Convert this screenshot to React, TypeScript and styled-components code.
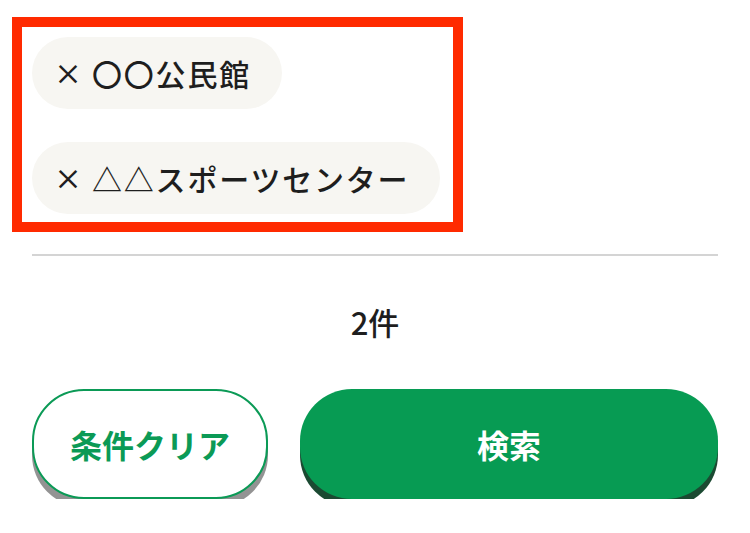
import styled, { createGlobalStyle } from "styled-components";

const GlobalStyle = createGlobalStyle`
  html, body {
    margin: 0;
    padding: 0;
    background: #fff;
  }
  body {
    font-family: "Noto Sans CJK JP", "Noto Sans", sans-serif;
    color: #222;
  }
`;

const filters = ["〇〇公民館", "△△スポーツセンター"];

const App = () => {
  return (
    <>
      <GlobalStyle />
      <Page>
        <FilterBox>
          {filters.map((name) => (
            <Chip key={name}>
              <ChipRemove>×</ChipRemove>
              <ChipLabel>{name}</ChipLabel>
            </Chip>
          ))}
        </FilterBox>
        <Divider />
        <ResultCount>2件</ResultCount>
        <ButtonRow>
          <ClearButton>条件クリア</ClearButton>
          <SearchButton>検索</SearchButton>
        </ButtonRow>
      </Page>
    </>
  );
};

const Page = styled.div`
  width: 750px;
  box-sizing: border-box;
  padding: 17px 32px 0;
  display: flex;
  flex-direction: column;
`;

const FilterBox = styled.div`
  width: 451px;
  box-sizing: border-box;
  margin-left: -20px;
  border: 10px solid #ff2a00;
  padding: 10px 10px 8px;
  display: flex;
  flex-direction: column;
  align-items: flex-start;
  gap: 33px;
`;

const Chip = styled.div`
  height: 72px;
  box-sizing: border-box;
  padding: 0 31px 0 22px;
  border-radius: 36px;
  background: #f7f6f2;
  display: flex;
  align-items: center;
  font-size: 30px;
  font-weight: 500;
  color: #1e1e1e;
`;

const ChipRemove = styled.span`
  font-size: 28px;
  margin-right: 10px;
`;

const ChipLabel = styled.span`
  letter-spacing: 1.8px;
`;

const Divider = styled.div`
  height: 2px;
  background: #d4d4d4;
  margin-top: 22px;
`;

const ResultCount = styled.div`
  margin-top: 43px;
  text-align: center;
  font-size: 31px;
  font-weight: 500;
  line-height: 45px;
  color: #1e1e1e;
`;

const ButtonRow = styled.div`
  margin-top: 45px;
  display: flex;
  gap: 32px;
`;

const BaseButton = styled.button`
  height: 110px;
  box-sizing: border-box;
  border-radius: 52px;
  font-family: "Noto Sans CJK JP", sans-serif;
  font-size: 32px;
  font-weight: 700;
  display: flex;
  align-items: center;
  justify-content: center;
  cursor: pointer;
`;

const ClearButton = styled(BaseButton)`
  width: 236px;
  background: #fff;
  border: 2px solid #0b9a56;
  color: #0b9a56;
  box-shadow: 0 8px 0 #939393;
`;

const SearchButton = styled(BaseButton)`
  flex: 1;
  background: #079b53;
  border: none;
  color: #fff;
  box-shadow: 0 8px 0 #1b4a32;
`;

export default App;
